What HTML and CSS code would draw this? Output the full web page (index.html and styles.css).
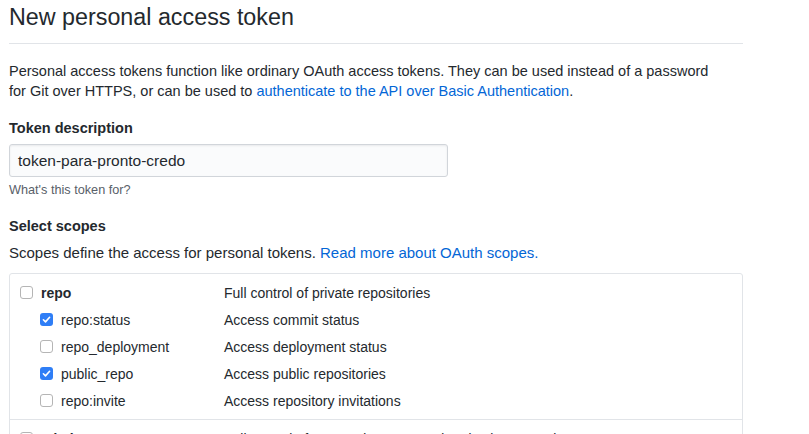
FILE: index.html
```html
<!DOCTYPE html>
<html>
<head>
<meta charset="utf-8">
<link rel="stylesheet" href="styles.css">
</head>
<body>
<div class="page">
  <h2 class="title">New personal access token</h2>
  <p class="intro">Personal access tokens function like ordinary OAuth access tokens. They can be used instead of a password<br>for Git over HTTPS, or can be used to <a href="#">authenticate to the API over Basic Authentication</a>.</p>

  <label class="field-label">Token description</label>
  <div class="input">token-para-pronto-credo</div>
  <p class="note">What's this token for?</p>

  <h3 class="field-label scopes-label">Select scopes</h3>
  <p class="scopes-desc">Scopes define the access for personal tokens. <a href="#">Read more about OAuth scopes.</a></p>

  <div class="scopes">
    <div class="group">
      <div class="row">
        <span class="name main"><span class="cb"></span><b>repo</b></span>
        <span class="desc">Full control of private repositories</span>
      </div>
      <div class="row">
        <span class="name sub"><span class="cb on"><svg viewBox="0 0 13 13"><path d="M3.4 6.8l2.1 2.1 4.1-4.6" fill="none" stroke="#fff" stroke-width="1.6" stroke-linecap="round" stroke-linejoin="round"/></svg></span>repo:status</span>
        <span class="desc">Access commit status</span>
      </div>
      <div class="row">
        <span class="name sub"><span class="cb"></span>repo_deployment</span>
        <span class="desc">Access deployment status</span>
      </div>
      <div class="row">
        <span class="name sub"><span class="cb on"><svg viewBox="0 0 13 13"><path d="M3.4 6.8l2.1 2.1 4.1-4.6" fill="none" stroke="#fff" stroke-width="1.6" stroke-linecap="round" stroke-linejoin="round"/></svg></span>public_repo</span>
        <span class="desc">Access public repositories</span>
      </div>
      <div class="row">
        <span class="name sub"><span class="cb"></span>repo:invite</span>
        <span class="desc">Access repository invitations</span>
      </div>
    </div>
    <div class="group">
      <div class="row">
        <span class="name main"><span class="cb"></span><b>admin:org</b></span>
        <span class="desc">Full control of orgs and teams, read and write org projects</span>
      </div>
    </div>
  </div>
</div>
</body>
</html>
```

FILE: styles.css
```css
html, body {
  margin: 0;
  padding: 0;
  background: #fff;
}
body {
  font-family: "Liberation Sans", Arial, sans-serif;
  color: #24292e;
  font-size: 14px;
  line-height: 20px;
  overflow: hidden;
}
.page {
  width: 734px;
  padding-left: 9px;
}
a {
  color: #0366d6;
  text-decoration: none;
}
.title {
  margin: 0;
  padding: 2px 0 11px;
  font-size: 23.3px;
  line-height: 30px;
  font-weight: 400;
  border-bottom: 1px solid #e1e4e8;
}
.intro {
  margin: 17px 0 0;
  font-size: 14.5px;
  line-height: 20px;
  white-space: nowrap;
}
.field-label {
  display: block;
  margin: 17px 0 0;
  font-size: 14.5px;
  line-height: 20px;
  font-weight: 700;
}
.input {
  margin-top: 6px;
  width: 421px;
  height: 31px;
  box-sizing: content-box;
  padding: 0 8px;
  border: 1px solid #d1d5da;
  border-radius: 3px;
  background: #fafbfc;
  font-size: 15.5px;
  line-height: 31px;
  box-shadow: inset 0 1px 2px rgba(27,31,35,0.075);
}
.note {
  margin: 4px 0 0;
  font-size: 12.7px;
  line-height: 18px;
  color: #586069;
}
.scopes-label {
  margin-top: 17px;
}
.scopes-desc {
  margin: 7px 0 0;
  font-size: 15px;
}
.scopes {
  margin-top: 10px;
  border: 1px solid #e1e4e8;
  border-radius: 3px;
}
.group {
  padding: 5px 0;
  border-bottom: 1px solid #e1e4e8;
}
.row {
  display: grid;
  grid-template-columns: 214px 1fr;
  height: 27px;
  align-items: center;
}
.name {
  display: flex;
  align-items: center;
  gap: 8px;
  padding-left: 10px;
}
.name.sub {
  padding-left: 30px;
}
.name b {
  font-weight: 700;
}
.desc {
  color: #24292e;
}
.cb {
  width: 11px;
  height: 11px;
  border: 1px solid #b5b5b5;
  border-radius: 3px;
  background: #fff;
  flex: none;
  display: flex;
}
.cb.on {
  width: 13px;
  height: 13px;
  border: 0;
  background: #2f7ef6;
}
.cb svg {
  width: 13px;
  height: 13px;
}
```
